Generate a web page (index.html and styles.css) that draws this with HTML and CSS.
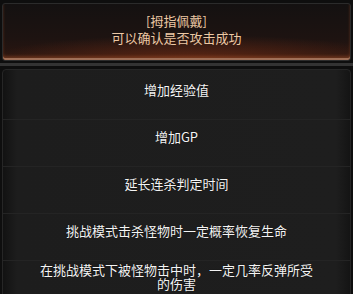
FILE: index.html
```html
<!DOCTYPE html>
<html lang="zh-CN">
<head>
    <meta charset="UTF-8">
    <meta name="viewport" content="width=device-width, initial-scale=1.0">
    <title>拇指佩戴</title>
    <link rel="stylesheet" href="styles.css">
</head>
<body>
    <div class="notice">
        <p>[拇指佩戴]</p>
        <p>可以确认是否攻击成功</p>
    </div>
    <div class="divider"></div>
    <ul class="options">
        <li>增加经验值</li>
        <li>增加GP</li>
        <li>延长连杀判定时间</li>
        <li>挑战模式击杀怪物时一定概率恢复生命</li>
        <li class="two-lines">在挑战模式下被怪物击中时，一定几率反弹所受的伤害</li>
    </ul>
</body>
</html>
```

FILE: styles.css
```css
body {
    margin: 0;
    padding: 0;
    background-color: #0e0e0e;
    font-family: "Noto Sans CJK SC", "Liberation Sans", sans-serif;
    font-size: 13px;
    overflow: hidden;
}
.notice {
    margin: 3px 2px 0;
    height: 58px;
    box-sizing: border-box;
    padding-top: 8px;
    border: 1px solid #2b2b2b;
    border-radius: 3px;
    background:
        radial-gradient(ellipse 60% 45% at 55% 100%, rgba(130, 50, 22, 0.6), transparent),
        linear-gradient(#141111, #1d1311 60%, #2c1610);
    box-shadow: inset 0 -2px 0 #a07058, inset 0 -4px 3px rgba(150, 75, 40, 0.5);
    text-align: center;
    color: #ecc8a4;
}
.notice p {
    margin: 0;
    line-height: 17px;
}
.divider {
    height: 3px;
    margin: 2px 0 0;
    background-color: #333333;
}
.options {
    list-style: none;
    margin: 3px 2px 0;
    padding: 3px 0 0;
    background: linear-gradient(90deg, #121212, #1d1d1d 4%, #1e1e1e 96%, #141414);
    border: 1px solid #262626;
    border-radius: 4px;
}
.options li {
    height: 47px;
    box-sizing: border-box;
    padding: 9px 34px 0;
    line-height: 16px;
    text-align: center;
    color: #f4f4f4;
    text-shadow: 0 0 1px #000;
    border-bottom: 1px solid #242424;
}
.options li.two-lines {
    height: 40px;
    padding-top: 2px;
    line-height: 14px;
    border-bottom: none;
}
```
